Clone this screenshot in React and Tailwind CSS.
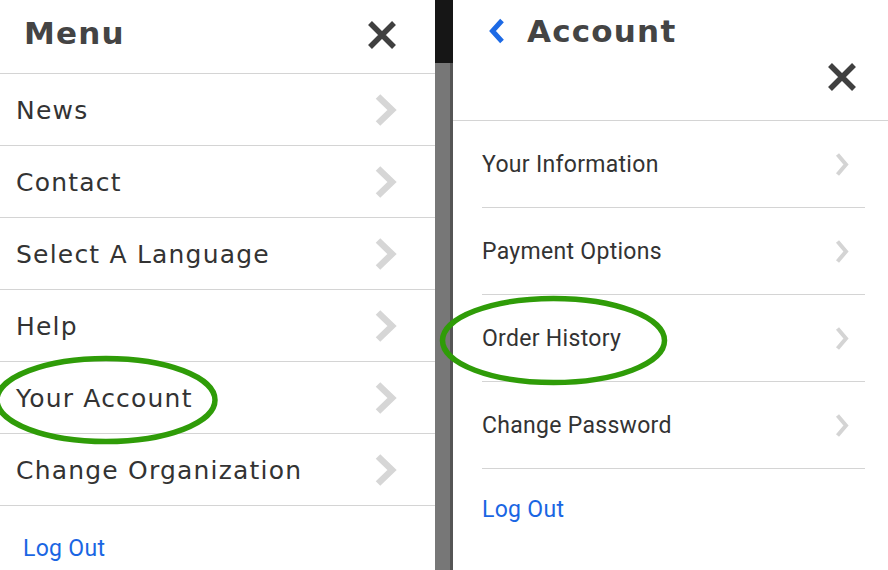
const leftItems = ['News', 'Contact', 'Select A Language', 'Help', 'Your Account', 'Change Organization'];
const rightItems = ['Your Information', 'Payment Options', 'Order History', 'Change Password'];

const CloseIcon = ({ className }) => (
  <svg viewBox="0 0 30 28" className={className} fill="none">
    <path d="M3 2 L27 26 M27 2 L3 26" stroke="#404040" strokeWidth="5.5" />
  </svg>
);

const BigChevron = () => (
  <svg viewBox="0 0 24 34" className="w-[24px] h-[34px]" fill="none">
    <path d="M4 3.5 L18 17 L4 30.5" stroke="#d6d6d6" strokeWidth="6.5" strokeLinejoin="miter" />
  </svg>
);

const SmallChevron = () => (
  <svg viewBox="0 0 14 25" className="w-[14px] h-[25px]" fill="none">
    <path d="M2.5 2.5 L11 12.5 L2.5 22.5" stroke="#d4d4d4" strokeWidth="4" />
  </svg>
);

const App = () => {
  return (
    <div className="relative flex w-[888px] h-[570px] overflow-hidden bg-white" style={{ fontFamily: 'Roboto, sans-serif' }}>
      {/* Main menu */}
      <div className="w-[435px] shrink-0 flex flex-col" style={{ fontFamily: '"DejaVu Sans", sans-serif' }}>
        <div className="h-[73px] flex items-center justify-between pl-[24px] pr-[38px] pb-[6px]">
          <h1 className="text-[31px] font-bold text-[#444] tracking-[1.2px]">Menu</h1>
          <CloseIcon className="w-[30px] h-[28px] mt-[3px]" />
        </div>
        {leftItems.map((label) => (
          <div key={label} className="h-[72px] border-t border-[#d4d4d4] flex items-center justify-between pl-[16px] pr-[37px]">
            <span className="text-[25px] text-[#333] tracking-[1.2px] pt-[3px]">{label}</span>
            <BigChevron />
          </div>
        ))}
        <div className="border-t border-[#d4d4d4] pl-[23px] pt-[26px]">
          <a className="text-[23px] text-[#1a66e3] tracking-[0.3px]" style={{ fontFamily: 'Roboto, sans-serif' }}>Log Out</a>
        </div>
      </div>

      {/* Divider / scrollbar */}
      <div className="w-[18px] shrink-0 flex flex-col">
        <div className="h-[63px] bg-[#161616]" />
        <div className="flex-1 bg-[#777] border-r-[3px] border-[#555]" />
      </div>

      {/* Account submenu */}
      <div className="flex-1 flex flex-col">
        <div className="h-[121px] border-b border-[#d4d4d4] flex flex-col pl-[35px] pr-[31px]">
          <div className="flex items-center h-[64px] pb-[2px]">
            <svg viewBox="0 0 18 26" className="w-[18px] h-[26px]" fill="none">
              <path d="M14 2.5 L4.5 13 L14 23.5" stroke="#1d6ae5" strokeWidth="5" />
            </svg>
            <h2 className="ml-[21px] text-[31px] font-bold text-[#444] tracking-[1.2px]" style={{ fontFamily: '"DejaVu Sans", sans-serif' }}>Account</h2>
          </div>
          <div className="flex justify-end">
            <CloseIcon className="w-[30px] h-[28px] -mt-[1px]" />
          </div>
        </div>
        <div className="pl-[29px] pr-[23px] flex flex-col">
          {rightItems.map((label) => (
            <div key={label} className="h-[87px] border-b border-[#d4d4d4] flex items-center justify-between pr-[16px]">
              <span className="text-[23px] text-[#333] tracking-[0.3px] pt-[3px]">{label}</span>
              <SmallChevron />
            </div>
          ))}
          <div className="pt-[24px]">
            <a className="text-[23px] text-[#1a66e3] tracking-[0.3px]">Log Out</a>
          </div>
        </div>
      </div>

      {/* Annotation ellipses */}
      <svg className="absolute inset-0 pointer-events-none" width="888" height="570" viewBox="0 0 888 570" fill="none">
        <ellipse cx="106" cy="400" rx="109" ry="41.5" stroke="#2f9c08" strokeWidth="5.5" />
        <ellipse cx="553.5" cy="340.5" rx="111" ry="42" stroke="#2f9c08" strokeWidth="5.5" />
      </svg>
    </div>
  );
};

export default App;
